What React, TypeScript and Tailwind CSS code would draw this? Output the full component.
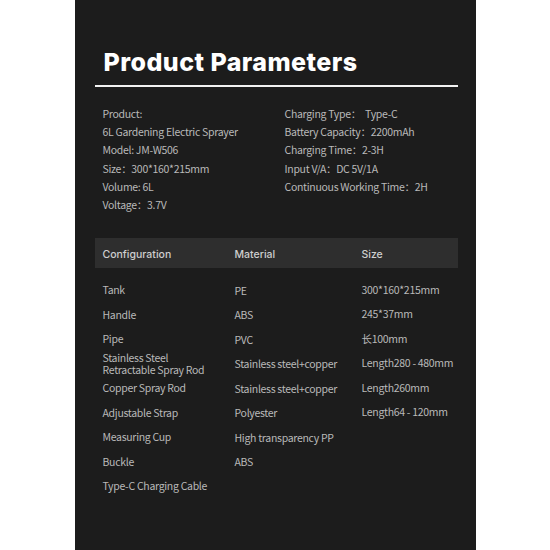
const leftParams = [
  "Product:",
  "6L Gardening Electric Sprayer",
  "Model: JM-W506",
  "Size：300*160*215mm",
  "Volume: 6L",
  "Voltage：3.7V",
];

const rightParams = [
  "Charging Type：  Type-C",
  "Battery Capacity：2200mAh",
  "Charging Time：2-3H",
  "Input V/A：DC 5V/1A",
  "Continuous Working Time：2H",
];

const rows: [string, string, string][] = [
  ["Tank", "PE", "300*160*215mm"],
  ["Handle", "ABS", "245*37mm"],
  ["Pipe", "PVC", "长100mm"],
  ["Stainless Steel\nRetractable Spray Rod", "Stainless steel+copper", "Length280 - 480mm"],
  ["Copper Spray Rod", "Stainless steel+copper", "Length260mm"],
  ["Adjustable Strap", "Polyester", "Length64 - 120mm"],
  ["Measuring Cup", "High transparency PP", ""],
  ["Buckle", "ABS", ""],
  ["Type-C Charging Cable", "", ""],
];

const bodyFont = { fontFamily: '"Noto Sans CJK SC", "Noto Sans", sans-serif' };

export default function App() {
  return (
    <div className="min-h-[550px] w-full bg-white">
      <div
        className="mx-auto flex h-[550px] w-[401px] flex-col bg-[#1c1c1c] pl-[20px] pr-[18px] pt-[47px]"
        style={bodyFont}
      >
        <h1 className="pl-[9px] font-['Inter',sans-serif] text-[25px] font-extrabold leading-[30px] tracking-[0.45px] text-white">
          Product Parameters
        </h1>
        <div className="mt-[8px] h-[2px] w-full bg-[#f2f2f2]" />

        <div className="mt-[18px] grid grid-cols-[182px_1fr] pl-[8px] text-[10.5px] leading-[18.2px] tracking-[-0.3px] text-[#b9b9b9]">
          <div className="flex flex-col">
            {leftParams.map((t) => (
              <div key={t} className="whitespace-pre">{t}</div>
            ))}
          </div>
          <div className="flex flex-col">
            {rightParams.map((t) => (
              <div key={t} className="whitespace-pre">{t}</div>
            ))}
          </div>
        </div>

        <div className="mt-[24px] grid h-[30px] grid-cols-[132px_127px_1fr] items-center bg-[#2e2e2e] pl-[8px] pt-[3px] font-['Inter',sans-serif] text-[10.5px] font-medium text-[#cfcfcf]">
          <div>Configuration</div>
          <div>Material</div>
          <div>Size</div>
        </div>

        <div className="mt-[10px] flex flex-col pl-[8px] text-[10.5px] tracking-[-0.3px] text-[#b9b9b9]">
          {rows.map(([a, b, c]) => (
            <div key={a} className="grid h-[24.5px] grid-cols-[132px_127px_1fr] items-center">
              <div className="whitespace-pre leading-[12px]">{a}</div>
              <div className="whitespace-nowrap">{b}</div>
              <div className="-mt-[2px] whitespace-nowrap">{c}</div>
            </div>
          ))}
        </div>
      </div>
    </div>
  );
}
